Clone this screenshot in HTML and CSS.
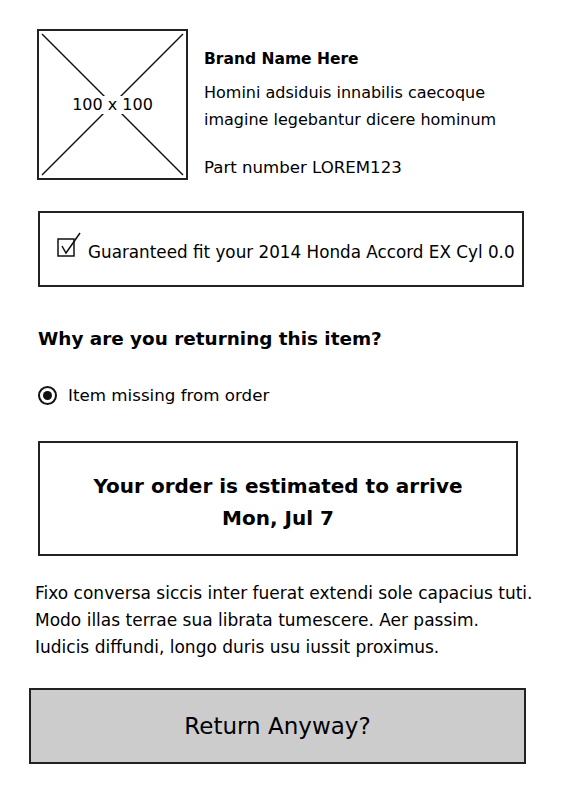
FILE: index.html
```html
<!DOCTYPE html>
<html lang="en">
<head>
    <meta charset="UTF-8">
    <meta name="viewport" content="width=device-width, initial-scale=1.0">
    <title>Return Item</title>
    <link rel="stylesheet" href="styles.css">
</head>
<body>
    <div class="page">
        <div class="product">
            <div class="thumb">
                <svg class="thumb-x" viewBox="0 0 147 147" preserveAspectRatio="none">
                    <line x1="3" y1="3" x2="144" y2="144"/>
                    <line x1="144" y1="3" x2="3" y2="144"/>
                </svg>
                <span class="thumb-label">100 x 100</span>
            </div>
            <div class="product-info">
                <div class="brand">Brand Name Here</div>
                <p class="desc">Homini adsiduis innabilis caecoque<br>imagine legebantur dicere hominum</p>
                <p class="part">Part number LOREM123</p>
            </div>
        </div>

        <div class="fit-box">
            <svg class="check" viewBox="0 0 25 27" width="25" height="27">
                <rect x="1" y="7" width="16" height="17"/>
                <path d="M5 14 L9 21 L23 1"/>
            </svg>
            <span>Guaranteed fit your 2014 Honda Accord EX Cyl 0.0</span>
        </div>

        <h3 class="question">Why are you returning this item?</h3>

        <label class="radio-row">
            <span class="radio"><span class="radio-dot"></span></span>
            Item missing from order
        </label>

        <div class="estimate">
            Your order is estimated to arrive<br>
            Mon, Jul 7
        </div>

        <p class="note">
            Fixo conversa siccis inter fuerat extendi sole capacius tuti.<br>
            Modo illas terrae sua librata tumescere. Aer passim.<br>
            Iudicis diffundi, longo duris usu iussit proximus.
        </p>

        <button class="return-btn">Return Anyway?</button>
    </div>
</body>
</html>
```

FILE: styles.css
```css
body {
    margin: 0;
    font-family: "DejaVu Sans", sans-serif;
    color: #000;
    background: #fff;
}
.page {
    padding: 29px 38px 30px 38px;
}
.product {
    display: flex;
    gap: 16px;
    margin-left: -1px;
}
.thumb {
    width: 147px;
    height: 147px;
    border: 2px solid #222;
    display: grid;
    place-items: center;
    flex-shrink: 0;
}
.thumb-x,
.thumb-label {
    grid-area: 1 / 1;
}
.thumb-x {
    width: 147px;
    height: 147px;
}
.thumb-x line {
    stroke: #111;
    stroke-width: 1.5;
}
.thumb-label {
    font-size: 16px;
    line-height: 18px;
    background: #fff;
    padding: 0 1px;
}
.product-info {
    padding-top: 20px;
    font-size: 16px;
    white-space: nowrap;
}
.brand {
    font-size: 15.5px;
    font-weight: bold;
    line-height: 20px;
}
.desc {
    margin: 10px 0 0;
    line-height: 27px;
}
.part {
    margin: 21px 0 0;
    font-size: 16.6px;
    line-height: 27px;
}
.fit-box {
    margin: 30px 2px 0 0;
    height: 72px;
    border: 2px solid #222;
    display: flex;
    align-items: center;
    gap: 6px;
    padding-left: 17px;
    font-size: 16.8px;
    white-space: nowrap;
}
.check {
    margin-top: -8px;
}
.check rect,
.check path {
    fill: none;
    stroke: #111;
    stroke-width: 1.5;
}
.fit-box span {
    padding-top: 6px;
}
.question {
    margin: 40px 0 0;
    font-size: 18.4px;
    line-height: 24px;
}
.radio-row {
    margin-top: 32px;
    display: flex;
    align-items: center;
    gap: 11px;
    font-size: 16.7px;
    line-height: 24px;
}
.radio {
    width: 15px;
    height: 15px;
    border: 2px solid #111;
    border-radius: 50%;
    display: grid;
    place-items: center;
}
.radio-dot {
    width: 9px;
    height: 9px;
    background: #111;
    border-radius: 50%;
}
.estimate {
    margin: 34px 8px 0 0;
    border: 2px solid #222;
    padding: 27px 0 20px;
    text-align: center;
    font-size: 20px;
    font-weight: bold;
    line-height: 32px;
}
.note {
    margin: 24px 0 0 -3px;
    font-size: 17px;
    line-height: 27px;
    white-space: nowrap;
}
.return-btn {
    display: block;
    width: calc(100% + 9px);
    margin: 27px 0 0 -9px;
    height: 76px;
    background: #ccc;
    border: 2px solid #222;
    font-family: inherit;
    font-size: 23px;
    color: #000;
    padding: 0;
}
```
